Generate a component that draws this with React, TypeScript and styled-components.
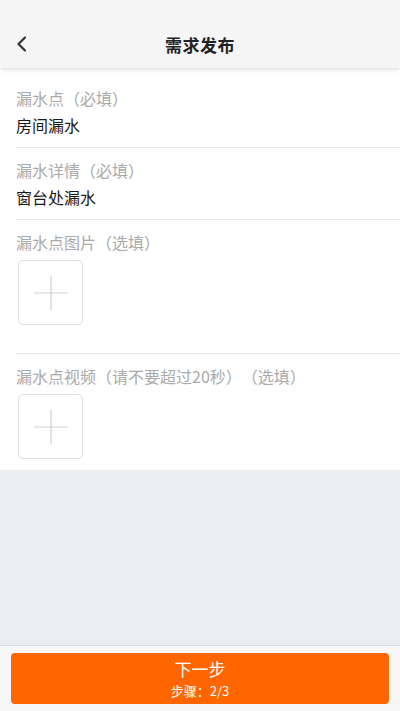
import React from 'react';
import styled, { createGlobalStyle } from 'styled-components';

const GlobalStyle = createGlobalStyle`
    html, body {
        margin: 0;
        padding: 0;
        background: #ebedf0;
        font-family: "Noto Sans CJK SC", "Noto Sans", sans-serif;
        text-spacing-trim: space-all;
    }
    * {
        box-sizing: border-box;
    }
`;

const Page = styled.div`
    display: flex;
    flex-direction: column;
    width: 400px;
    height: 711px;
    background-color: #ebedf0;
    overflow: hidden;
`;

const Header = styled.header`
    position: relative;
    z-index: 2;
    height: 68px;
    padding-top: 20px;
    background-color: #f5f5f5;
    box-shadow: 0 2px 4px rgba(0, 0, 0, 0.12);
`;

const NavBar = styled.div`
    position: relative;
    display: flex;
    align-items: center;
    justify-content: center;
    height: 48px;
`;

const BackButton = styled.div`
    position: absolute;
    left: 14px;
    top: 0;
    display: flex;
    align-items: center;
    height: 100%;
    cursor: pointer;
`;

const Title = styled.h1`
    margin: 0;
    font-size: 17px;
    font-weight: 700;
    color: #222222;
    letter-spacing: 0.5px;
`;

const Form = styled.div`
    background-color: #ffffff;
    padding-top: 8px;
`;

const Field = styled.div<{ last?: boolean; bottom: number }>`
    margin-left: 16px;
    padding: 10px 0 ${({ bottom }) => bottom}px;
    border-bottom: ${({ last }) => (last ? 'none' : '1px solid #e8e8e8')};
`;

const Label = styled.div`
    font-size: 16px;
    line-height: 24px;
    color: #aaaaaa;
`;

const Value = styled.div`
    margin-top: 2px;
    font-size: 16px;
    line-height: 26px;
    color: #1a1a1a;
`;

const UploadBox = styled.div`
    display: flex;
    align-items: center;
    justify-content: center;
    width: 65px;
    height: 65px;
    margin: 6px 0 0 2px;
    border: 1px solid #dddddd;
    border-radius: 5px;
    background-color: #ffffff;
    cursor: pointer;
`;

const Spacer = styled.div`
    flex: 1;
`;

const Footer = styled.footer`
    height: 66px;
    padding: 7px 11px;
    border-top: 1px solid #d6d9de;
    background-color: #f7f7f7;
`;

const NextButton = styled.button`
    display: flex;
    flex-direction: column;
    align-items: center;
    justify-content: center;
    width: 100%;
    height: 51px;
    padding: 0;
    border: none;
    border-radius: 4px;
    background-color: #ff6600;
    color: #ffffff;
    font-family: inherit;
    cursor: pointer;
`;

const NextText = styled.span`
    font-size: 17px;
    line-height: 24px;
`;

const StepText = styled.span`
    font-size: 13px;
    line-height: 18px;
    margin-top: 1px;
`;

const ChevronLeft = () => (
    <svg width="16" height="18" viewBox="0 0 16 18" fill="none">
        <path d="M11 2.5 L4.5 9 L11 15.5" stroke="#333333" strokeWidth="2.2" strokeLinecap="round" strokeLinejoin="round" />
    </svg>
);

const PlusIcon = () => (
    <svg width="34" height="34" viewBox="0 0 34 34">
        <path d="M17 0 V34 M0 17 H34" stroke="#d0d0d0" strokeWidth="1.2" />
    </svg>
);

const App: React.FC = () => {
    return (
        <>
            <GlobalStyle />
            <Page>
                <Header>
                    <NavBar>
                        <BackButton>
                            <ChevronLeft />
                        </BackButton>
                        <Title>需求发布</Title>
                    </NavBar>
                </Header>

                <Form>
                    <Field bottom={9}>
                        <Label>漏水点（必填）</Label>
                        <Value>房间漏水</Value>
                    </Field>
                    <Field bottom={9}>
                        <Label>漏水详情（必填）</Label>
                        <Value>窗台处漏水</Value>
                    </Field>
                    <Field bottom={28}>
                        <Label>漏水点图片（选填）</Label>
                        <UploadBox>
                            <PlusIcon />
                        </UploadBox>
                    </Field>
                    <Field last bottom={11}>
                        <Label>漏水点视频（请不要超过20秒）（选填）</Label>
                        <UploadBox>
                            <PlusIcon />
                        </UploadBox>
                    </Field>
                </Form>

                <Spacer />

                <Footer>
                    <NextButton>
                        <NextText>下一步</NextText>
                        <StepText>步骤：2/3</StepText>
                    </NextButton>
                </Footer>
            </Page>
        </>
    );
};

export default App;
